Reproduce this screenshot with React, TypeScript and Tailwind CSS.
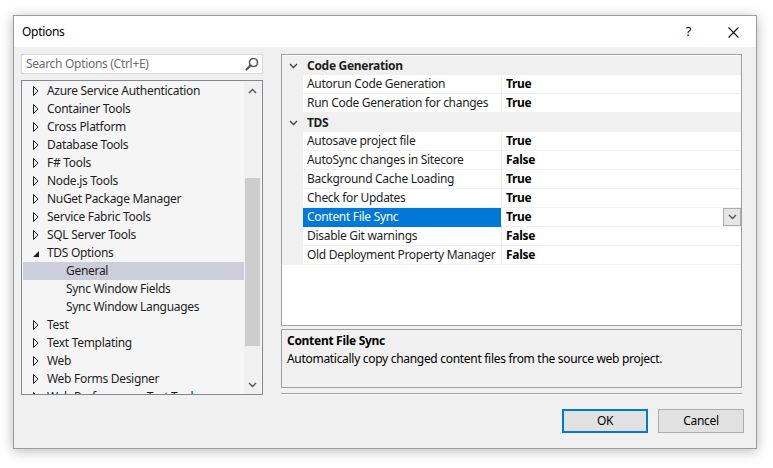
import React from "react";

const treeItems: { label: string; level: 0 | 1; state?: "closed" | "open"; selected?: boolean }[] = [
  { label: "Azure Service Authentication", level: 0, state: "closed" },
  { label: "Container Tools", level: 0, state: "closed" },
  { label: "Cross Platform", level: 0, state: "closed" },
  { label: "Database Tools", level: 0, state: "closed" },
  { label: "F# Tools", level: 0, state: "closed" },
  { label: "Node.js Tools", level: 0, state: "closed" },
  { label: "NuGet Package Manager", level: 0, state: "closed" },
  { label: "Service Fabric Tools", level: 0, state: "closed" },
  { label: "SQL Server Tools", level: 0, state: "closed" },
  { label: "TDS Options", level: 0, state: "open" },
  { label: "General", level: 1, selected: true },
  { label: "Sync Window Fields", level: 1 },
  { label: "Sync Window Languages", level: 1 },
  { label: "Test", level: 0, state: "closed" },
  { label: "Text Templating", level: 0, state: "closed" },
  { label: "Web", level: 0, state: "closed" },
  { label: "Web Forms Designer", level: 0, state: "closed" },
  { label: "Web Performance Test Tools", level: 0, state: "closed" },
];

type Row =
  | { kind: "cat"; label: string }
  | { kind: "prop"; name: string; value: string; selected?: boolean };

const rows: Row[] = [
  { kind: "cat", label: "Code Generation" },
  { kind: "prop", name: "Autorun Code Generation", value: "True" },
  { kind: "prop", name: "Run Code Generation for changes", value: "True" },
  { kind: "cat", label: "TDS" },
  { kind: "prop", name: "Autosave project file", value: "True" },
  { kind: "prop", name: "AutoSync changes in Sitecore", value: "False" },
  { kind: "prop", name: "Background Cache Loading", value: "True" },
  { kind: "prop", name: "Check for Updates", value: "True" },
  { kind: "prop", name: "Content File Sync", value: "True", selected: true },
  { kind: "prop", name: "Disable Git warnings", value: "False" },
  { kind: "prop", name: "Old Deployment Property Manager", value: "False" },
];

function ClosedArrow() {
  return (
    <svg width="6" height="10" viewBox="0 0 6 10" className="shrink-0">
      <path d="M0.5 0.5 L5 5 L0.5 9.5 Z" fill="none" stroke="#1e1e1e" strokeWidth="1" />
    </svg>
  );
}

function OpenArrow() {
  return (
    <svg width="6" height="10" viewBox="0 0 6 10" className="shrink-0">
      <path d="M6 3 L6 9 L0 9 Z" fill="#1e1e1e" />
    </svg>
  );
}

function Chevron({ up, color = "#555" }: { up?: boolean; color?: string }) {
  return (
    <svg width="9" height="6" viewBox="0 0 9 6">
      <path
        d={up ? "M1 5 L4.5 1.5 L8 5" : "M1 1 L4.5 4.5 L8 1"}
        fill="none"
        stroke={color}
        strokeWidth="1.4"
      />
    </svg>
  );
}

export default function App() {
  return (
    <div className="w-[773px] h-[468px] bg-white font-['Noto_Sans',sans-serif] text-[12px] tracking-[-0.3px] text-[#1e1e1e] pt-[15px] pl-[13px]">
      <div className="w-[744px] h-[434px] border border-[#9b9b9b] bg-[#f0f0f0] shadow-[0_2px_12px_rgba(0,0,0,0.28)] flex flex-col">
        {/* title bar */}
        <div className="h-[31px] bg-white flex items-center shrink-0 pt-[1px]">
          <span className="pl-[8px] text-[12px] text-black">Options</span>
          <span className="ml-auto mr-[37px] text-[13px] text-black">?</span>
          <svg width="11" height="11" viewBox="0 0 11 11" className="mr-[17px]">
            <path d="M0.5 0.5 L10.5 10.5 M10.5 0.5 L0.5 10.5" stroke="#111" strokeWidth="1.1" />
          </svg>
        </div>

        <div className="flex pl-[7px] pt-[7px] gap-[18px]">
          {/* left column */}
          <div className="w-[242px] flex flex-col">
            <div className="h-[20px] bg-white border border-[#d9d9d9] flex items-center pl-[4px] pr-[3px]">
              <span className="text-[#6d6d6d] leading-none">Search Options (Ctrl+E)</span>
              <svg width="14" height="14" viewBox="0 0 14 14" className="ml-auto">
                <circle cx="8.5" cy="5.5" r="4" fill="none" stroke="#5a5a5a" strokeWidth="1.6" />
                <path d="M5.6 8.4 L1.5 12.5" stroke="#5a5a5a" strokeWidth="2.2" strokeLinecap="round" />
              </svg>
            </div>
            <div className="mt-[6px] h-[315px] border border-[#828790] bg-[#f5f5f5] flex overflow-hidden">
              <div className="flex-1 pt-[1px] pl-[1px] overflow-hidden">
                {treeItems.map((it) => (
                  <div
                    key={it.label}
                    className={`h-[18px] flex items-center whitespace-nowrap ${it.selected ? "bg-[#cccedb]" : ""}`}
                  >
                    {it.level === 0 ? (
                      <>
                        <span className="w-[10px]" />
                        {it.state === "open" ? <OpenArrow /> : <ClosedArrow />}
                        <span className="ml-[8px]">{it.label}</span>
                      </>
                    ) : (
                      <span className="ml-[43px]">{it.label}</span>
                    )}
                  </div>
                ))}
              </div>
              <div className="w-[17px] bg-[#f0f0f0] flex flex-col items-center shrink-0 mr-[1px]">
                <div className="h-[17px] flex items-center justify-center pt-[2px]">
                  <Chevron up />
                </div>
                <div className="mt-[80px] w-[15px] h-[168px] bg-[#cdcdcd]" />
                <div className="mt-auto h-[17px] flex items-center justify-center pb-[2px]">
                  <Chevron />
                </div>
              </div>
            </div>
          </div>

          {/* right column */}
          <div className="w-[461px] flex flex-col">
            <div className="h-[272px] border border-[#a0a0a0] bg-white flex flex-col pt-[1px]">
              {rows.map((r, i) =>
                r.kind === "cat" ? (
                  <div key={i} className="h-[19px] bg-[#f0f0f0] flex items-center shrink-0">
                    <span className="w-[21px] flex justify-center pl-[1px]">
                      <Chevron color="#444" />
                    </span>
                    <span className="ml-[4px] font-bold">{r.label}</span>
                  </div>
                ) : (
                  <div key={i} className="h-[19px] flex shrink-0">
                    <div className="w-[21px] bg-[#f0f0f0]" />
                    <div
                      className={`w-[199px] border-b border-r border-[#f0f0f0] flex items-center pl-[4px] whitespace-nowrap ${
                        r.selected ? "bg-[#0078d7] text-white border-b-[#0078d7]" : ""
                      }`}
                    >
                      {r.name}
                    </div>
                    <div className="flex-1 border-b border-[#f0f0f0] flex items-center pl-[4px] font-bold text-black">
                      {r.value}
                      {r.selected && (
                        <div className="ml-auto w-[18px] h-[18px] bg-[#e5e5e5] border border-[#adadad] flex items-center justify-center">
                          <Chevron color="#555" />
                        </div>
                      )}
                    </div>
                  </div>
                )
              )}
            </div>
            <div className="mt-[3px] h-[59px] border border-[#a0a0a0] bg-[#f0f0f0] px-[5px] pt-[2px] leading-[18px]">
              <div className="font-bold text-black">Content File Sync</div>
              <div className="text-black">Automatically copy changed content files from the source web project.</div>
            </div>
            <div className="mt-[5px] h-[2px] border-t border-[#a0a0a0] border-b border-b-white" />
          </div>
        </div>

        {/* buttons */}
        <div className="flex justify-end gap-[10px] pr-[12px] mt-auto mb-[15px]">
          <button className="w-[86px] h-[24px] bg-[#e1e1e1] border-2 border-[#0078d7] text-black text-[12px]">
            OK
          </button>
          <button className="w-[86px] h-[24px] bg-[#e1e1e1] border border-[#adadad] text-black text-[12px]">
            Cancel
          </button>
        </div>
      </div>
    </div>
  );
}
